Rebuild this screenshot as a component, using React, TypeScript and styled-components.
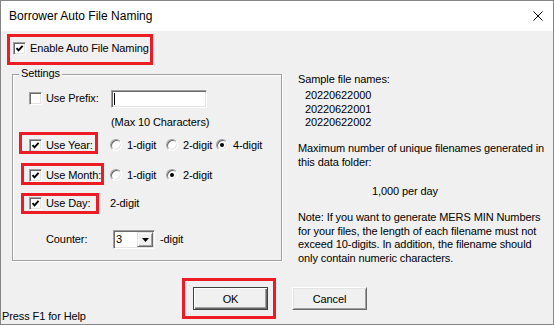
import React from 'react';
import styled, { createGlobalStyle } from 'styled-components';

const GlobalStyle = createGlobalStyle`
    html, body {
        margin: 0;
        padding: 0;
        background: #fff;
    }
    body {
        font-family: "Liberation Sans", Arial, sans-serif;
        font-size: 11px;
        letter-spacing: -0.1px;
        color: #000;
    }
`

const Window = styled.div`
    width: 554px;
    height: 325px;
    box-sizing: border-box;
    border: 1px solid #858585;
    display: flex;
    flex-direction: column;
    background: #f0f0f0;
`

const TitleBar = styled.div`
    height: 30px;
    flex-shrink: 0;
    background: #fff;
    display: flex;
    align-items: center;
    justify-content: space-between;
    padding: 0 10px 0 8px;
    font-size: 12px;
    letter-spacing: 0;
`

const Body = styled.div`
    flex: 1;
    display: flex;
    flex-direction: column;
`

const EnableRow = styled.div`
    display: flex;
    padding: 11px 0 0 12px;
`

const Highlight = styled.span<{ $l: number; $t: number; $w: number; $h: number }>`
    position: relative;
    display: inline-flex;

    &::after {
        content: '';
        position: absolute;
        left: ${p => p.$l}px;
        top: ${p => p.$t}px;
        width: ${p => p.$w}px;
        height: ${p => p.$h}px;
        box-sizing: border-box;
        border: 3px solid #ed1c24;
        pointer-events: none;
    }
`

const CheckField = styled.label`
    display: inline-flex;
    align-items: center;
    gap: 4px;
    height: 13px;
    line-height: 13px;
    white-space: nowrap;
`

const Box = styled.span`
    width: 13px;
    height: 13px;
    box-sizing: border-box;
    background: #fff;
    border: 1px solid;
    border-color: #a0a0a0 #fff #fff #a0a0a0;
    box-shadow: inset 1px 1px #696969, inset -1px -1px #e3e3e3;
    display: flex;
    align-items: center;
    justify-content: center;
`

const Main = styled.div`
    display: flex;
    align-items: flex-start;
    margin-top: 18px;
`

const GroupBox = styled.div`
    position: relative;
    margin: 1px 0 0 11px;
    width: 270px;
    height: 187px;
    box-sizing: border-box;
    border: 1px solid #a0a0a0;
    box-shadow: inset 1px 1px #fff, 1px 1px #fff;
    padding: 14px 0 0 16px;
    display: flex;
    flex-direction: column;
`

const Legend = styled.span`
    position: absolute;
    top: -8px;
    left: 6px;
    padding: 0 2px;
    line-height: 13px;
    background: #f0f0f0;
`

const Row = styled.div<{ $mt: number; $h?: number }>`
    display: grid;
    grid-template-columns: 81px auto;
    align-items: center;
    height: ${p => p.$h ?? 13}px;
    margin-top: ${p => p.$mt}px;
    line-height: 13px;
    white-space: nowrap;
`

const Cell = styled.div<{ $pl?: number }>`
    display: flex;
    align-items: center;
    padding-left: ${p => p.$pl ?? 0}px;
`

const TextField = styled.div`
    margin-left: 1px;
    width: 96px;
    height: 18px;
    box-sizing: border-box;
    background: #fff;
    border: 1px solid;
    border-color: #a0a0a0 #fff #fff #a0a0a0;
    box-shadow: inset 1px 1px #696969, inset -1px -1px #e3e3e3;
    display: flex;
    align-items: center;
    padding-left: 2px;
`

const Caret = styled.span`
    width: 1px;
    height: 12px;
    background: #000;
`

const RadioItem = styled.label<{ $w?: number }>`
    display: inline-flex;
    align-items: center;
    gap: 5px;
    width: ${p => (p.$w ? `${p.$w}px` : 'auto')};
`

const Radio = styled.span<{ $on?: boolean }>`
    position: relative;
    width: 12px;
    height: 12px;
    box-sizing: border-box;
    border-radius: 50%;
    background: #fff;
    border: 1px solid;
    border-color: #a0a0a0 #fff #fff #a0a0a0;
    box-shadow: inset 1px 1px #696969, inset -1px -1px #e3e3e3;

    &::after {
        content: '';
        display: ${p => (p.$on ? 'block' : 'none')};
        position: absolute;
        left: 3px;
        top: 3px;
        width: 4px;
        height: 4px;
        border-radius: 50%;
        background: #000;
    }
`

const Combo = styled.div`
    margin-left: 3px;
    width: 42px;
    height: 19px;
    box-sizing: border-box;
    background: #fff;
    border: 1px solid;
    border-color: #a0a0a0 #fff #fff #a0a0a0;
    box-shadow: inset 1px 1px #696969, inset -1px -1px #e3e3e3;
    display: flex;
    align-items: stretch;
    padding: 1px;
`

const ComboValue = styled.span`
    flex: 1;
    padding-left: 1px;
    line-height: 15px;
`

const DropButton = styled.span`
    width: 16px;
    box-sizing: border-box;
    background: #f0f0f0;
    border: 1px solid;
    border-color: #e3e3e3 #696969 #696969 #e3e3e3;
    box-shadow: inset 1px 1px #fff, inset -1px -1px #a0a0a0;
    display: flex;
    align-items: center;
    justify-content: center;
`

const Unit = styled.span`
    margin-left: 5px;
`

const Panel = styled.div`
    margin-left: 16px;
    line-height: 13.5px;
    white-space: nowrap;
`

const Line = styled.div<{ $mt?: number; $pl?: number }>`
    margin-top: ${p => p.$mt ?? 0}px;
    padding-left: ${p => p.$pl ?? 0}px;
`

const ButtonRow = styled.div`
    display: flex;
    gap: 24px;
    margin-top: 22px;
    padding-left: 192px;
`

const Button = styled.button<{ $default?: boolean }>`
    width: 75px;
    height: 23px;
    box-sizing: border-box;
    padding: 0;
    font: inherit;
    letter-spacing: inherit;
    color: #000;
    background: #f0f0f0;
    border: 1px solid;
    border-color: ${p => (p.$default ? '#404040' : '#fff #696969 #696969 #fff')};
    box-shadow: ${p =>
        p.$default
            ? 'inset 1px 1px #fff, inset -1px -1px #696969, inset -2px -2px #a0a0a0'
            : 'inset 1px 1px #e3e3e3, inset -1px -1px #a0a0a0'};
`

const StatusBar = styled.div`
    margin-top: auto;
    padding: 0 0 1px 1px;
    line-height: 13px;
`

const CheckMark = () => (
    <svg width="9" height="9" viewBox="0 0 9 9">
        <polyline points="1.5,4.2 3.5,6.4 7.6,1.8" fill="none" stroke="#000" strokeWidth="1.9" />
    </svg>
)

const Check = ({ label, checked }: { label: string; checked?: boolean }) => (
    <CheckField>
        <Box>{checked && <CheckMark />}</Box>
        {label}
    </CheckField>
)

const Close = () => (
    <svg width="10" height="10" viewBox="0 0 10 10">
        <path d="M0.5 0.5 L9.5 9.5 M9.5 0.5 L0.5 9.5" stroke="#000" strokeWidth="1" />
    </svg>
)

const Arrow = () => (
    <svg width="7" height="4" viewBox="0 0 7 4">
        <polygon points="0,0 7,0 3.5,4" fill="#000" />
    </svg>
)

const App = (): JSX.Element => {
    return (
        <>
            <GlobalStyle />
            <Window>
                <TitleBar>
                    <span>Borrower Auto File Naming</span>
                    <Close />
                </TitleBar>
                <Body>
                    <EnableRow>
                        <Highlight $l={-6} $t={-8} $w={146} $h={31}>
                            <Check label="Enable Auto File Naming" checked />
                        </Highlight>
                    </EnableRow>
                    <Main>
                        <GroupBox>
                            <Legend>Settings</Legend>
                            <Row $mt={0} $h={19}>
                                <Cell><Check label="Use Prefix:" /></Cell>
                                <Cell><TextField><Caret /></TextField></Cell>
                            </Row>
                            <Row $mt={8}>
                                <span />
                                <Cell $pl={1}>(Max 10 Characters)</Cell>
                            </Row>
                            <Row $mt={9.5}>
                                <Cell>
                                    <Highlight $l={-10} $t={-7} $w={79} $h={22}>
                                        <Check label="Use Year:" checked />
                                    </Highlight>
                                </Cell>
                                <Cell>
                                    <RadioItem $w={56}><Radio />1-digit</RadioItem>
                                    <RadioItem $w={50}><Radio />2-digit</RadioItem>
                                    <RadioItem><Radio $on />4-digit</RadioItem>
                                </Cell>
                            </Row>
                            <Row $mt={17}>
                                <Cell>
                                    <Highlight $l={-8} $t={-6} $w={83} $h={22}>
                                        <Check label="Use Month:" checked />
                                    </Highlight>
                                </Cell>
                                <Cell>
                                    <RadioItem $w={56}><Radio />1-digit</RadioItem>
                                    <RadioItem><Radio $on />2-digit</RadioItem>
                                </Cell>
                            </Row>
                            <Row $mt={15.5}>
                                <Cell>
                                    <Highlight $l={-8} $t={-4.5} $w={78} $h={21}>
                                        <Check label="Use Day:" checked />
                                    </Highlight>
                                </Cell>
                                <Cell>2-digit</Cell>
                            </Row>
                            <Row $mt={20} $h={19}>
                                <Cell $pl={17}>Counter:</Cell>
                                <Cell>
                                    <Combo>
                                        <ComboValue>3</ComboValue>
                                        <DropButton><Arrow /></DropButton>
                                    </Combo>
                                    <Unit>-digit</Unit>
                                </Cell>
                            </Row>
                        </GroupBox>
                        <Panel>
                            <Line>Sample file names:</Line>
                            <Line $mt={2.5} $pl={7}>20220622000</Line>
                            <Line $pl={7}>20220622001</Line>
                            <Line $pl={7}>20220622002</Line>
                            <Line $mt={12.5}>Maximum number of unique filenames generated in</Line>
                            <Line>this data folder:</Line>
                            <Line $mt={16} $pl={74}>1,000 per day</Line>
                            <Line $mt={12.5}>Note: If you want to generate MERS MIN Numbers</Line>
                            <Line>for your files, the length of each filename must not</Line>
                            <Line>exceed 10-digits. In addition, the filename should</Line>
                            <Line>only contain numeric characters.</Line>
                        </Panel>
                    </Main>
                    <ButtonRow>
                        <Highlight $l={-11} $t={-9} $w={94} $h={41}>
                            <Button $default>OK</Button>
                        </Highlight>
                        <Button>Cancel</Button>
                    </ButtonRow>
                    <StatusBar>Press F1 for Help</StatusBar>
                </Body>
            </Window>
        </>
    )
}

export default App
